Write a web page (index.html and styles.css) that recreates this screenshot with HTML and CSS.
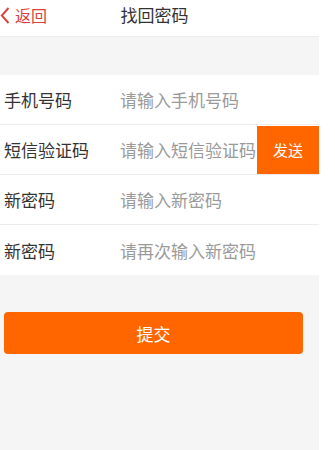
FILE: index.html
```html
<!DOCTYPE html>
<html lang="zh-CN">
    <head>
        <meta charset="utf-8">
        <title>找回密码</title>
        <link rel="stylesheet" href="styles.css">
    </head>
    <body>
        <div class="page">
            <div class="header">
                <a class="back" href="#">
                    <svg class="back-icon" width="10" height="17" viewBox="0 0 10 17">
                        <path d="M8.5 1 L1.8 8.5 L8.5 16" fill="none" stroke="#d9413a" stroke-width="1.9"/>
                    </svg>
                    <span>返回</span>
                </a>
                <div class="title">找回密码</div>
            </div>

            <div class="gap"></div>

            <div class="form">
                <div class="row">
                    <div class="label">手机号码</div>
                    <input class="field" type="text" placeholder="请输入手机号码">
                </div>
                <div class="row">
                    <div class="label">短信验证码</div>
                    <input class="field" type="text" placeholder="请输入短信验证码">
                    <button class="send">发送</button>
                </div>
                <div class="row">
                    <div class="label">新密码</div>
                    <input class="field" type="password" placeholder="请输入新密码">
                </div>
                <div class="row">
                    <div class="label">新密码</div>
                    <input class="field" type="password" placeholder="请再次输入新密码">
                </div>
            </div>

            <div class="submit-wrap">
                <button class="submit">提交</button>
            </div>
        </div>
    </body>
</html>
```

FILE: styles.css
```css
* {
    box-sizing: border-box;
}

body {
    margin: 0;
    background: #fff;
    font-family: "Noto Sans CJK SC", "Noto Sans", sans-serif;
}

.page {
    width: 319px;
    height: 450px;
    background: #f5f5f5;
}

/* 标题文字偏上, 不是垂直居中 */
.header {
    position: relative;
    height: 37px;
    padding-top: 4px;
    background: #fff;
    border-bottom: 1px solid #ececec;
    display: flex;
    align-items: flex-start;
    justify-content: center;
}

.back {
    position: absolute;
    left: 0;
    top: 4px;
    height: 22px;
    display: flex;
    align-items: center;
    color: #d9413a;
    text-decoration: none;
    font-size: 16px;
    line-height: 22px;
}

.back-icon {
    margin-right: 5px;
}

.title {
    font-size: 17px;
    line-height: 22px;
    color: #333;
    margin-right: 10px;
}

.gap {
    height: 38px;
}

.form {
    background: #fff;
}

.row {
    height: 50px;
    display: flex;
    align-items: center;
    border-bottom: 1px solid #ececec;
}

.row:last-child {
    border-bottom: none;
}

.label {
    width: 120px;
    padding-left: 4px;
    font-size: 17px;
    color: #333;
    flex-shrink: 0;
}

.field {
    flex: 1;
    min-width: 0;
    height: 100%;
    border: none;
    outline: none;
    padding: 0;
    font-family: inherit;
    font-size: 17px;
    color: #333;
    background: transparent;
}

.field::placeholder {
    color: #9a9a9a;
}

.send {
    width: 62px;
    height: 48px;
    flex-shrink: 0;
    border: none;
    background: #ff6600;
    color: #fff;
    font-family: inherit;
    font-size: 15px;
}

.submit-wrap {
    padding: 37px 16px 0 4px;
}

.submit {
    display: block;
    width: 100%;
    height: 42px;
    border: none;
    border-radius: 4px;
    background: #ff6600;
    color: #fff;
    font-family: inherit;
    font-size: 17px;
}
```
